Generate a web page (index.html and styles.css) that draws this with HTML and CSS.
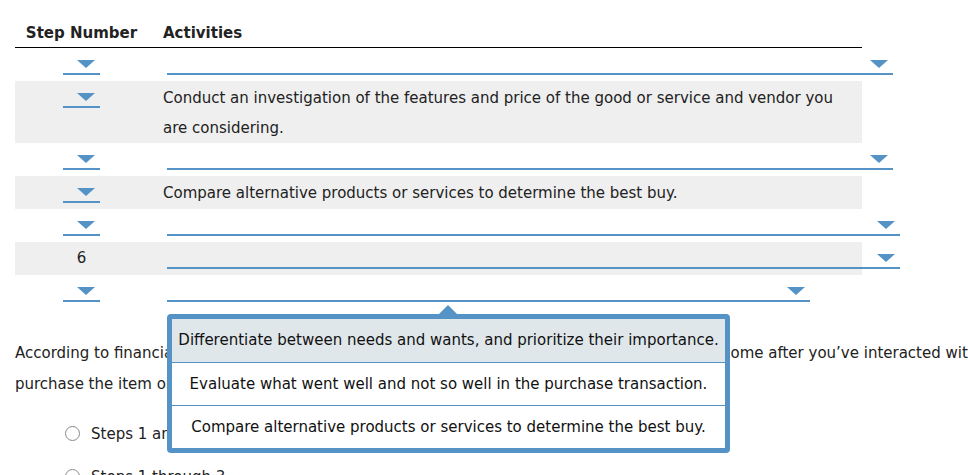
FILE: index.html
```html
<!DOCTYPE html>
<html>
<head>
<meta charset="utf-8">
<link rel="stylesheet" href="styles.css">
</head>
<body>
<div class="page">
  <div class="table">
    <div class="row head">
      <div class="step">Step Number</div>
      <div class="act">Activities</div>
    </div>
    <div class="row">
      <div class="step"><span class="dd dd-step"><i class="tri"></i></span></div>
      <div class="act"><span class="dd dd-act w726"><i class="tri"></i></span></div>
    </div>
    <div class="row shade">
      <div class="step"><span class="dd dd-step"><i class="tri"></i></span></div>
      <div class="act text">Conduct an investigation of the features and price of the good or service and vendor you are considering.</div>
    </div>
    <div class="row">
      <div class="step"><span class="dd dd-step"><i class="tri"></i></span></div>
      <div class="act"><span class="dd dd-act w726"><i class="tri"></i></span></div>
    </div>
    <div class="row shade">
      <div class="step"><span class="dd dd-step"><i class="tri"></i></span></div>
      <div class="act text">Compare alternative products or services to determine the best buy.</div>
    </div>
    <div class="row">
      <div class="step"><span class="dd dd-step"><i class="tri"></i></span></div>
      <div class="act"><span class="dd dd-act w733"><i class="tri"></i></span></div>
    </div>
    <div class="row shade">
      <div class="step num">6</div>
      <div class="act"><span class="dd dd-act w733"><i class="tri"></i></span></div>
    </div>
    <div class="row">
      <div class="step"><span class="dd dd-step"><i class="tri"></i></span></div>
      <div class="act"><span class="dd dd-act w643"><i class="tri"></i></span></div>
    </div>
  </div>

  <p class="question">According to financial planning advisors, which of these stages in your buying process should come after you’ve interacted with the seller and<br>purchase the item or service?</p>

  <ul class="options">
    <li><span class="radio"></span>Steps 1 and 2</li>
    <li><span class="radio"></span>Steps 1 through 3</li>
  </ul>

  <div class="menu">
    <div class="menu-item active">Differentiate between needs and wants, and prioritize their importance.</div>
    <div class="menu-item">Evaluate what went well and not so well in the purchase transaction.</div>
    <div class="menu-item">Compare alternative products or services to determine the best buy.</div>
  </div>
</div>
</body>
</html>
```
FILE: styles.css
```css
html, body {
  margin: 0;
  padding: 0;
  background: #fff;
  overflow: hidden;
}
body {
  width: 968px;
  height: 475px;
  font-family: "DejaVu Sans", Verdana, sans-serif;
  font-size: 15px;
  color: #222;
}
.page {
  position: relative;
  padding: 0 0 0 15px;
  width: 1200px;
}
.table {
  width: 847px;
}
.row {
  display: grid;
  grid-template-columns: 148px 1fr;
  align-items: start;
}
.row.head {
  font-weight: bold;
  line-height: 20px;
  padding: 23px 0 4px;
  border-bottom: 1px solid #000;
}
.row.shade {
  background: #efefef;
}
.step {
  display: flex;
  justify-content: center;
  padding-right: 15px;
}
.row .step, .row .act {
  padding-top: 4px;
  padding-bottom: 6px;
}
.row.head .step, .row.head .act {
  padding-top: 0;
  padding-bottom: 0;
}
.act.text {
  line-height: 30px;
  padding-top: 2px;
  padding-bottom: 0;
  padding-right: 20px;
}
.step.num {
  line-height: 30px;
  padding-top: 1px;
  padding-bottom: 1px;
}
.dd {
  display: flex;
  justify-content: flex-end;
  align-items: flex-end;
  box-sizing: content-box;
  height: 16px;
  padding: 0 5px 5px 0;
  border-bottom: 2px solid #5592c5;
}
.dd-step {
  width: 32px;
}
.dd-act {
  margin-left: 4px;
}
.w726 { width: 721px; }
.w733 { width: 728px; }
.w643 { width: 638px; }
.tri {
  display: block;
  width: 0;
  height: 0;
  border-left: 9px solid transparent;
  border-right: 9px solid transparent;
  border-top: 8px solid #5592c5;
}
.question {
  margin: 30px 0 0;
  line-height: 31px;
  white-space: nowrap;
}
.options {
  list-style: none;
  margin: 12px 0 0;
  padding: 0 0 0 50px;
}
.options li {
  display: flex;
  align-items: center;
  height: 43px;
}
.radio {
  width: 13px;
  height: 13px;
  border: 1px solid #8a8a8a;
  border-radius: 50%;
  margin-right: 11px;
  background: #fff;
}
.menu {
  position: absolute;
  left: 167px;
  top: 314px;
  width: 553px;
  border: 5px solid #5592c5;
  border-radius: 4px;
  background: #fff;
}
.menu::before {
  content: "";
  position: absolute;
  left: 267px;
  top: -14px;
  border-left: 9px solid transparent;
  border-right: 9px solid transparent;
  border-bottom: 9px solid #5592c5;
}
.menu-item {
  height: 42px;
  line-height: 42px;
  text-align: center;
  white-space: nowrap;
  color: #111;
  border-top: 1px solid #5592c5;
}
.menu-item:first-child {
  border-top: 0;
  height: 43px;
}
.menu-item.active {
  background: #dfe7eb;
}
```
